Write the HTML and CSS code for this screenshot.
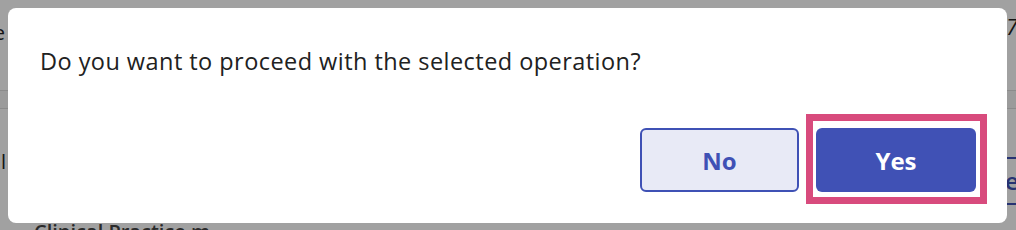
FILE: index.html
```html
<!doctype html>
<html lang="en">
  <head>
    <meta charset="UTF-8" />
    <meta name="viewport" content="width=device-width, initial-scale=1.0" />
    <title>Confirm</title>
    <link rel="stylesheet" href="styles.css">
  </head>
  <body>
    <!-- page behind the dialog, mostly hidden -->
    <div class="page">
      <span class="frag frag-left-top">Title</span>
      <div class="table-head"></div>
      <span class="frag frag-left-mid">Total</span>
      <span class="frag frag-bottom">Clinical Practice m</span>
      <span class="frag frag-right-top">7</span>
      <span class="side-btn">ew</span>
    </div>

    <div class="backdrop">
      <div class="modal" role="dialog">
        <p class="modal-text">Do you want to proceed with the selected operation?</p>
        <div class="actions">
          <button class="btn btn-secondary">No</button>
          <button class="btn btn-primary">Yes</button>
        </div>
      </div>
    </div>

    <div class="highlight"></div>
  </body>
</html>
```

FILE: styles.css
```css
html, body {
  margin: 0;
  width: 1016px;
  height: 230px;
  overflow: hidden;
}
body {
  font-family: "Open Sans", "Liberation Sans", sans-serif;
  background: #fff;
  position: relative;
}
.page {
  position: absolute;
  inset: 0;
  overflow: hidden;
  color: #222;
}
.frag {
  position: absolute;
  font-size: 20px;
  line-height: 24px;
  white-space: nowrap;
}
.frag-left-top {
  right: 1011px;
  top: 21px;
}
.frag-left-mid {
  right: 1010px;
  top: 150px;
}
.frag-bottom {
  left: 34px;
  top: 220px;
  font-weight: 600;
  color: #444;
}
.frag-right-top {
  left: 1006px;
  top: 14px;
  font-style: italic;
  font-size: 22px;
}
.table-head {
  position: absolute;
  left: 0;
  right: 0;
  top: 90px;
  height: 17px;
  border-top: 1px solid #ddd;
  border-bottom: 1px solid #ddd;
  background: #f6f6f6;
}
.side-btn {
  position: absolute;
  left: 1005px;
  top: 157px;
  width: 40px;
  height: 44px;
  border-top: 2px solid #3f51b5;
  border-bottom: 2px solid #3f51b5;
  color: #3f51b5;
  font-size: 24px;
  font-weight: 600;
  line-height: 44px;
}
.backdrop {
  position: absolute;
  inset: 0;
  background: rgba(0, 0, 0, 0.37);
  padding: 8px 9px 7px 8px;
}
.modal {
  background: #fff;
  border-radius: 8px;
  height: 215px;
  box-sizing: border-box;
  padding: 38px 31px 31px 32px;
}
.modal-text {
  margin: 0;
  font-size: 23.5px;
  line-height: 30px;
  letter-spacing: 0.45px;
  color: #212121;
}
.actions {
  display: flex;
  justify-content: flex-end;
  gap: 17px;
  margin-top: 52px;
}
.btn {
  font-family: inherit;
  width: 160px;
  height: 64px;
  border-radius: 6px;
  font-size: 24px;
  font-weight: 700;
  cursor: pointer;
}
.btn-secondary {
  width: 159px;
  background: #e8eaf6;
  color: #3f51b5;
  border: 2px solid #3f51b5;
}
.btn-primary {
  background: #4051b5;
  color: #fff;
  border: none;
}
.highlight {
  position: absolute;
  left: 806px;
  top: 114px;
  width: 181px;
  height: 90px;
  box-sizing: border-box;
  border: 7px solid #d84b7d;
  pointer-events: none;
}
```
